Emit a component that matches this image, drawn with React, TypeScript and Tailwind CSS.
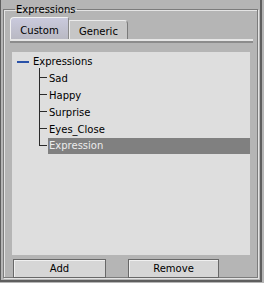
import React from 'react';

const items = ['Sad', 'Happy', 'Surprise', 'Eyes_Close', 'Expression'];

export default function App() {
  const selected = 'Expression';

  return (
    <div className="w-[264px] h-[283px] bg-[#b5b5b5] font-['DejaVu_Sans',sans-serif] text-[10px] text-black">
      <div className="w-[262px] h-[282px] border-l border-r-2 border-b-2 border-[#5e5e5e] flex flex-col">
        <fieldset className="ml-[2px] mr-[2px] mt-[3px] h-[275px] border border-[#7c7c7c] shadow-[inset_1px_1px_0_#e4e4e4,1px_1px_0_#e4e4e4] pl-[6px] pr-[3px] flex flex-col">
          <legend className="ml-[5px] px-[1px] leading-[13px]">Expressions</legend>

          {/* tabs */}
          <div className="flex items-end h-[22px] mt-[1px]">
            <div className="w-[59px] h-[22px] rounded-tl-[4px] rounded-tr-[2px] border-t border-l border-[#f2f2f2] border-r border-r-[#8a8a8a] bg-gradient-to-b from-[#cacadd] to-[#b9b9c3] flex items-center justify-center pt-[3px]">
              Custom
            </div>
            <div className="w-[59px] h-[19px] rounded-tr-[4px] border-t border-l border-[#ececec] border-r border-r-[#7a7a7a] bg-[#c6c6c6] flex items-center justify-center pt-[3px]">
              Generic
            </div>
          </div>
          <div className="w-[243px] h-[4px] border-t-2 border-[#e6e6e6] border-b-2 border-b-[#8c8c8c]" />

          {/* tree */}
          <div className="ml-[2px] mt-[9px] w-[238px] h-[203px] bg-[#dedede] pt-[1px]">
            <div className="flex items-center h-[17px] pl-[5px]">
              <div className="w-[12px] h-[2px] bg-[#2a52a8]" />
              <span className="ml-[4px] leading-[17px]">Expressions</span>
            </div>
            <div className="ml-[27px] -mt-[2px]">
              <div className="h-[2px] border-l border-[#2a2a2a]" />
              {items.map((name, i) => {
                const last = i === items.length - 1;
                const sel = name === selected;
                return (
                  <div key={name} className="flex h-[17px]">
                    <div className="w-[8px] h-[17px] flex flex-col">
                      <div className="h-[8px] border-l border-b border-[#2a2a2a]" />
                      {!last && <div className="flex-1 border-l border-[#2a2a2a]" />}
                    </div>
                    <div
                      className={
                        sel
                          ? 'flex-1 ml-[1px] pl-[1px] leading-[16px] h-[16px] bg-[#808080] text-[#ececec]'
                          : 'flex-1 ml-[1px] pl-[1px] leading-[17px]'
                      }
                    >
                      {name}
                    </div>
                  </div>
                );
              })}
            </div>
          </div>

          {/* buttons */}
          <div className="flex mt-[4px] ml-[3px]">
            <button className="w-[93px] h-[19px] bg-[#d6d6d6] border border-[#686868] shadow-[inset_1px_1px_0_#f0f0f0] flex items-center justify-center">
              Add
            </button>
            <button className="ml-[22px] w-[91px] h-[19px] bg-[#d6d6d6] border border-[#686868] shadow-[inset_1px_1px_0_#f0f0f0] flex items-center justify-center">
              Remove
            </button>
          </div>
        </fieldset>
      </div>
    </div>
  );
}
